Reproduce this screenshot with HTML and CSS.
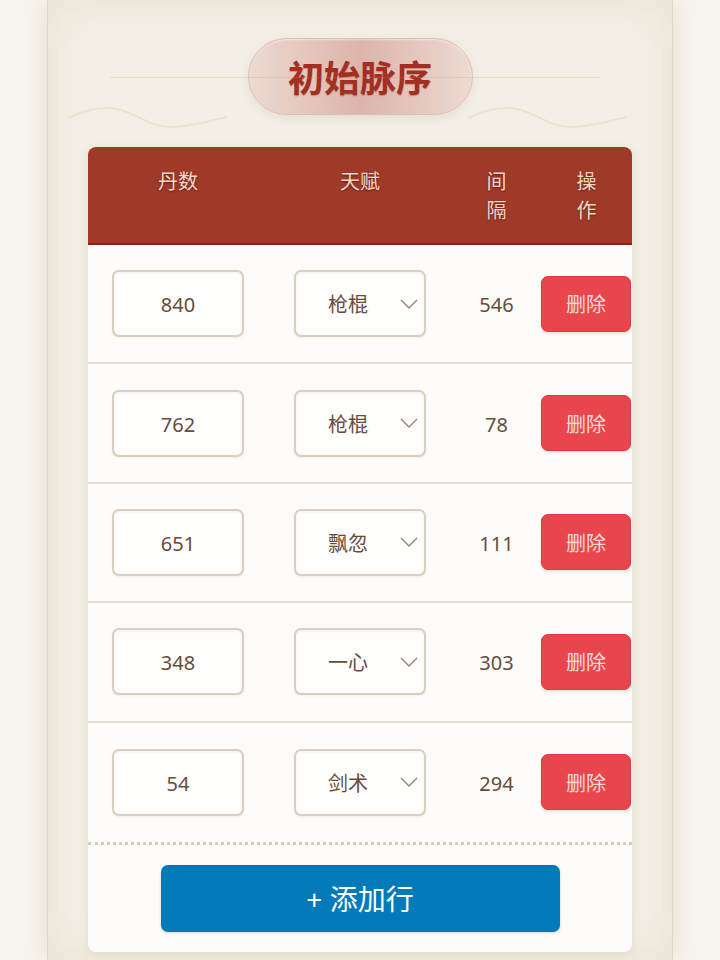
FILE: index.html
```html
<!DOCTYPE html>
<html lang="zh">
<head>
<meta charset="utf-8">
<title>初始脉序</title>
<link rel="stylesheet" href="styles.css">
</head>
<body>
<div class="page">
  <div class="title-wrap">
    <svg class="wave wave-left" width="162" height="28" viewBox="0 0 162 28"><path d="M1 14 C18 6 36 1 54 6 C72 11 84 23 104 23 C124 23 142 17 160 13" fill="none" stroke="#e8e1d5" stroke-width="2"/></svg>
    <svg class="wave wave-right" width="162" height="28" viewBox="0 0 162 28"><path d="M1 14 C18 6 36 1 54 6 C72 11 84 23 104 23 C124 23 142 17 160 13" fill="none" stroke="#e8e1d5" stroke-width="2"/></svg>
    <h1 class="pill">初始脉序</h1>
  </div>

  <div class="table-card">
    <div class="thead">
      <div class="th">丹数</div>
      <div class="th">天赋</div>
      <div class="th"><span class="stack">间隔</span></div>
      <div class="th"><span class="stack">操作</span></div>
    </div>

    <div class="row">
      <input class="num" type="text" value="840">
      <div class="select"><span class="sel-text">枪棍术</span><svg class="chev" width="18" height="10" viewBox="0 0 18 10"><polyline points="1,1 9,9 17,1" fill="none" stroke="#96857a" stroke-width="1.4"/></svg></div>
      <div class="gap">546</div>
      <button class="del">删除</button>
    </div>
    <div class="row">
      <input class="num" type="text" value="762">
      <div class="select"><span class="sel-text">枪棍术</span><svg class="chev" width="18" height="10" viewBox="0 0 18 10"><polyline points="1,1 9,9 17,1" fill="none" stroke="#96857a" stroke-width="1.4"/></svg></div>
      <div class="gap">78</div>
      <button class="del">删除</button>
    </div>
    <div class="row">
      <input class="num" type="text" value="651">
      <div class="select"><span class="sel-text">飘忽</span><svg class="chev" width="18" height="10" viewBox="0 0 18 10"><polyline points="1,1 9,9 17,1" fill="none" stroke="#96857a" stroke-width="1.4"/></svg></div>
      <div class="gap">111</div>
      <button class="del">删除</button>
    </div>
    <div class="row">
      <input class="num" type="text" value="348">
      <div class="select"><span class="sel-text">一心</span><svg class="chev" width="18" height="10" viewBox="0 0 18 10"><polyline points="1,1 9,9 17,1" fill="none" stroke="#96857a" stroke-width="1.4"/></svg></div>
      <div class="gap">303</div>
      <button class="del">删除</button>
    </div>
    <div class="row last">
      <input class="num" type="text" value="54">
      <div class="select"><span class="sel-text">剑术</span><svg class="chev" width="18" height="10" viewBox="0 0 18 10"><polyline points="1,1 9,9 17,1" fill="none" stroke="#96857a" stroke-width="1.4"/></svg></div>
      <div class="gap">294</div>
      <button class="del">删除</button>
    </div>

    <div class="foot">
      <button class="add">+ 添加行</button>
    </div>
  </div>
</div>
</body>
</html>
```

FILE: styles.css
```css
html, body {
  margin: 0;
  padding: 0;
}
body {
  background: #f8f5ef;
  font-family: "Noto Sans", "Noto Sans CJK SC", sans-serif;
  overflow: hidden;
}
.page {
  width: 626px;
  min-height: 960px;
  margin: 0 auto;
  box-sizing: border-box;
  padding: 38px 40px 0;
  background: #f3efe5;
  border-left: 1px solid #e1d8c8;
  border-right: 1px solid #e1d8c8;
  box-shadow: 0 0 24px rgba(140, 115, 80, 0.18), inset 0 0 40px rgba(205, 190, 160, 0.26);
}
.title-wrap {
  position: relative;
  height: 77px;
  display: flex;
  justify-content: center;
}
.title-wrap::after {
  content: "";
  position: absolute;
  left: 22px;
  right: 31px;
  top: 39px;
  height: 1px;
  background: rgba(190, 155, 135, 0.22);
}
.wave {
  position: absolute;
  top: 66px;
}
.wave-left { left: -21px; }
.wave-right { left: 379px; }
.pill {
  margin: 0;
  width: 225px;
  height: 77px;
  box-sizing: border-box;
  border-radius: 39px;
  border: 1px solid #d9c0b5;
  background: linear-gradient(90deg, #ecd9d0 0%, #e4c5bc 28%, #dcb4ab 50%, #e4c6bd 74%, #ecdad1 100%);
  box-shadow: 0 3px 8px rgba(150, 95, 75, 0.13), inset 0 1px 2px rgba(255, 255, 255, 0.5);
  display: flex;
  align-items: center;
  justify-content: center;
  font-size: 36px;
  font-weight: 700;
  color: #a22f1f;
  text-shadow: 0 1px 1px rgba(110, 25, 10, 0.3);
}
.table-card {
  margin-top: 32px;
  background: #fdfcfa;
  border-radius: 8px;
  overflow: hidden;
  box-shadow: 0 2px 8px rgba(120, 90, 60, 0.12);
}
.thead, .row {
  display: grid;
  grid-template-columns: 180px 184px 89px 91px;
}
.thead {
  height: 98px;
  box-sizing: border-box;
  padding-top: 20px;
  background: #9f3a29;
  border-bottom: 2px solid #7e2718;
}
.th {
  text-align: center;
  font-size: 20px;
  line-height: 29px;
  color: #f3d8cc;
  text-shadow: 0 1px 2px rgba(60, 10, 0, 0.6);
}
.stack {
  display: inline-block;
  width: 1.05em;
}
.row {
  height: 119.4px;
  box-sizing: border-box;
  border-bottom: 2px solid #e6ddcf;
  align-items: center;
  justify-items: center;
}
.row.last {
  border-bottom: none;
}
.num {
  width: 132px;
  height: 67px;
  box-sizing: border-box;
  border: 2px solid #dacfbf;
  border-radius: 7px;
  background: #fffefd;
  box-shadow: inset 0 1px 3px rgba(0, 0, 0, 0.06), 0 1px 2px rgba(120, 90, 60, 0.08);
  text-align: center;
  font-family: "Noto Sans", "Noto Sans CJK SC", sans-serif;
  font-size: 20px;
  color: #664c3d;
  padding: 2px 0 0;
  outline: none;
}
.select {
  width: 132px;
  height: 67px;
  box-sizing: border-box;
  border: 2px solid #dacfbf;
  border-radius: 7px;
  background: #fffefd;
  box-shadow: inset 0 1px 3px rgba(0, 0, 0, 0.06), 0 1px 2px rgba(120, 90, 60, 0.08);
  display: flex;
  align-items: center;
  padding-left: 32px;
  font-size: 20px;
  color: #664c3d;
}
.sel-text {
  width: 41px;
  overflow: hidden;
  white-space: nowrap;
}
.chev {
  margin-left: 31px;
}
.gap {
  font-size: 20px;
  color: #664c3d;
  padding-top: 2px;
}
.del {
  justify-self: start;
  width: 90px;
  height: 56px;
  border: 1px solid #db3b41;
  border-radius: 7px;
  background: #e8464c;
  color: #fbdcdc;
  font-family: "Noto Sans", "Noto Sans CJK SC", sans-serif;
  font-size: 20px;
  padding: 0;
  box-shadow: 0 2px 3px rgba(120, 30, 30, 0.12);
}
.foot {
  border-top: 3px dotted #d7cdbd;
  padding: 20px 0;
  display: flex;
  justify-content: center;
}
.add {
  width: 399px;
  height: 67px;
  border: none;
  border-radius: 7px;
  background: #0279b8;
  color: #ffffff;
  font-family: "Noto Sans", "Noto Sans CJK SC", sans-serif;
  font-size: 28px;
  padding: 0;
  box-shadow: 0 1px 3px rgba(0, 60, 100, 0.2);
}
```
